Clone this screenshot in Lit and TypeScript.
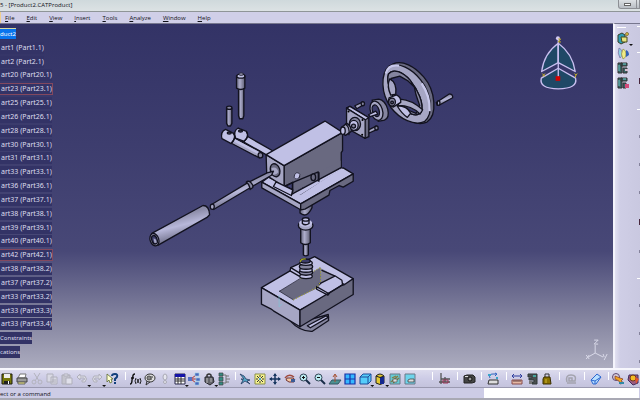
import { LitElement, html, svg, css } from "lit";
import { customElement, property } from "lit/decorators.js";

const icons: Record<string, unknown> = {
  save: svg`<path d="M1 1h10v10H1z" fill="#77780c" stroke="#1d1d10"/><path d="M3 1h6v4H3z" fill="#eee"/><path d="M3 8h6v3H3z" fill="#222"/><path d="M7 8h1v3H7z" fill="#fff"/>`,
  print: svg`<path d="M4 1h6L9 5H2z" fill="#fff" stroke="#777"/><path d="M1 5h10v4H1z" fill="#9b9b9b" stroke="#444"/><path d="M2 9h7v2H2z" fill="#eee87a" stroke="#666"/>`,
  cut: svg`<path d="M3 0l5 8M9 0L4 8" stroke="#b3b3bd" fill="none"/><circle cx="3" cy="9" r="2" fill="none" stroke="#b3b3bd"/><circle cx="9" cy="9" r="2" fill="none" stroke="#b3b3bd"/>`,
  copy: svg`<path d="M1 1h6v8H1zM5 4h6v7H5z" fill="#d9d9e4" stroke="#b0b0bb"/><path d="M6 7h4M6 9h4" stroke="#b0b0bb"/>`,
  paste: svg`<path d="M1 2h8v9H1z" fill="#c4c4cd" stroke="#adadb8"/><path d="M3 1h4v2H3zM5 5h6v6H5z" fill="#e0e0ea" stroke="#b0b0bb"/>`,
  undo: svg`<path d="M1 4l3-3v2h5q3 3 0 6H6V7h2q1-1 0-2H4v2z" fill="#dcdce6" stroke="#b0b0bb"/>`,
  redo: svg`<path d="M11 4L8 1v2H3q-3 3 0 6h3V7H4q-1-1 0-2h4v2z" fill="#dcdce6" stroke="#b0b0bb"/>`,
  help: svg`<path d="M1 1v8l2-2 1 3 2-1-1-3h2z" fill="#ffffd0" stroke="#5b6b30" stroke-width=".8"/><path d="M6 3q0-2 3-2t2 3L9 6v2M9 9v2" stroke="#12407c" stroke-width="2" fill="none"/>`,
  fx: svg`<path d="M1 11q2 0 2-4l1-4q0-2 2-2M2 5h3" stroke="#111" stroke-width="1.4" fill="none"/><path d="M7 5q-2 3 0 6M11 5q2 3 0 6M8 6l2 4M10 6l-2 4" stroke="#111" stroke-width=".9" fill="none"/>`,
  comment: svg`<ellipse cx="6" cy="5" rx="5" ry="4" fill="#ddd" stroke="#333"/><path d="M3 4h6M3 6h5M3 8l-1 4 4-3" stroke="#333" fill="none"/><circle cx="5" cy="5" r="2" fill="none" stroke="#555"/>`,
  bang: svg`<ellipse cx="6" cy="4" rx="2" ry="3" fill="#e6e6ee" stroke="#aaaab5"/><circle cx="6" cy="9" r="1.500" fill="#e6e6ee" stroke="#aaaab5"/>`,
  table: svg`<path d="M1 1h10v10H1z" fill="#fff" stroke="#26264a"/><path d="M1 1h10v3H1z" fill="#1414a8"/><path d="M1 6h10M1 8h10M4 4v7M7 4v7" stroke="#333"/>`,
  graph: svg`<path d="M3 6l5-4M3 6h5M3 6l5 4" stroke="#a33"/><path d="M0 4h4v4H0z" fill="#5673c6"/><path d="M7 0h4v3H7zM8 5h4v3H8zM7 9h4v3H7z" fill="#4a66bd" stroke="#99d4e8" stroke-width=".6"/>`,
  lock: svg`<path d="M4 5V2q2-2 4 0v3" fill="none" stroke="#333" stroke-width="1.5"/><path d="M2 4l8 0 1 5-4 3-5-3z" fill="#65656c" stroke="#26262c"/><path d="M4 5v5M8 5v4" stroke="#bbb"/>`,
  struct: svg`<path d="M1 0h4v3H1zM1 4h4v4H1zM1 9h4v3H1z" fill="#348b82" stroke="#444" stroke-width=".7"/><path d="M5 2h3v8H5M8 6h4M8 3h3M8 9h3" fill="none" stroke="#777"/>`,
  fly: svg`<path d="M1 1l4 2 2 3 4 1-3 1 3 3-5-3-4 3 2-4-2-1h3z" fill="#54a9c9" stroke="#263a60" stroke-width=".8"/>`,
  fit: svg`<path d="M1 1h10v10H1z" fill="#f8f48c" stroke="#8a8f4a"/><path d="M3 3l2 2M9 3L7 5M3 9l2-2M9 9L7 7M6 2v2M6 8v2M2 6h2M8 6h2" stroke="#33333a"/><path d="M5 5h2v2H5z" fill="#4b9ad4"/>`,
  pan: svg`<path d="M6 1v10M1 6h10" stroke="#17365f" stroke-width="1.5"/><path d="M6 0l2 3H4zM6 12l2-3H4zM0 6l3-2v4zM12 6L9 4v4z" fill="#17365f"/>`,
  rotate: svg`<path d="M1 5q4-5 9-1" fill="none" stroke="#a04a3c" stroke-width="1.5"/><path d="M3 5h6q3 1 1 4H5L2 7z" fill="#f3c7a2" stroke="#703534"/><path d="M7 6h4v3H7z" fill="#3b5b95"/>`,
  zin: svg`<circle cx="4.500" cy="4.500" r="3.500" fill="#bcecf2" stroke="#345"/><path d="M7 7l4 4" stroke="#182d48" stroke-width="2"/><path d="M3 4.500h3M4.500 3v3" stroke="#111"/>`,
  zout: svg`<circle cx="4.500" cy="4.500" r="3.500" fill="#bcecf2" stroke="#345"/><path d="M7 7l4 4" stroke="#182d48" stroke-width="2"/><path d="M3 4.500h3" stroke="#111"/>`,
  normal: svg`<path d="M3 7h9l-3 4H0z" fill="#4c9191" stroke="#345764"/><path d="M6 9V2M4 4l2-3 2 3" stroke="#a55030" fill="none"/>`,
  multi: svg`<path d="M1 1h10v10H1z" fill="#35b8ff" stroke="#1732a8" stroke-width="1.2"/><path d="M6 1v10M1 6h10" stroke="#1732a8" stroke-width="1.2"/>`,
  iso: svg`<path d="M1 4l3-3h8v7l-3 3H1z" fill="#55cdfa" stroke="#1e4d9a"/><path d="M1 4h8v7M9 4l3-3" fill="none" stroke="#1e4d9a"/>`,
  shade: svg`<path d="M2 3q4-4 8 0v7q-4 3-8 0z" fill="#e2c832" stroke="#222"/><path d="M6 4h4v7H6z" fill="#14288e"/><path d="M2 3q4 3 8 0" stroke="#222" fill="none"/>`,
  hide: svg`<path d="M1 1h10v10H1z" fill="#65cbd5" stroke="#6b7988"/><path d="M2 9l7-6M4 10l6-5M3 5l4-2" stroke="#8a7a40" stroke-width="1.3"/><path d="M4 6h4v3H4z" fill="#ddd" stroke="#444" stroke-width=".6"/>`,
  swap: svg`<path d="M1 1h10v10H1z" fill="#6dd4eb" stroke="#6b7988"/><path d="M4 7l2-1h4v3H4z" fill="#ddd" stroke="#444" stroke-width=".8"/>`,
  axis: svg`<path d="M3 0v11M1 9h11M7 4v5M3 6h9" stroke="#555" stroke-width="1.3"/><path d="M5 7h5v3H5z" fill="none" stroke="#935"/>`,
  camera: svg`<path d="M1 3l3-1h6l2 2v5l-3 1H1z" fill="#444" stroke="#222"/><circle cx="7" cy="6" r="2" fill="#999" stroke="#111"/><path d="M2 3h3v1H2z" fill="#ddd"/>`,
  material: svg`<path d="M2 7h9v4H1z" fill="#ddd" stroke="#333"/><path d="M3 5q-2-4 3-4h3M8 0l2 1-2 2" fill="none" stroke="#2e62c0"/><path d="M1 1h3v2H1zM9 4h2v2H9z" fill="#39a5c8"/>`,
  measure: svg`<path d="M1 3h10M3 1L1 3l2 2M9 1l2 2-2 2" stroke="#2e3d9c" fill="none"/><path d="M1 7h10v4H1z" fill="#e6b9a5" stroke="#864a4a"/><path d="M3 7v2M5 7v2M7 7v2M9 7v2" stroke="#644"/>`,
  item: svg`<path d="M2 1h9v10H6V9h2V7H3V5h3V4H2z" fill="#4a5050" stroke="#303838"/><path d="M7 2h3v2H7z" fill="#48a59e"/><path d="M3 8h3v3H3z" fill="#777"/>`,
  weight: svg`<path d="M4 4V1h4v3" fill="none" stroke="#333"/><path d="M3 4h6l1 7H2V6z" fill="#8b7200" stroke="#382d00"/><path d="M5 6v4" stroke="#cdb536"/>`,
  gray: svg`<path d="M2 9q-2-7 4-7 6 0 4 6H7V5H4v3h3M2 10h9" fill="none" stroke="#a3a3ad" stroke-width="1.5"/>`,
  erase: svg`<path d="M1 7l6-6 4 3-5 7H3z" fill="#b9dfff" stroke="#2c67cf"/><path d="M1 7l4 1 6-4M5 8v3" stroke="#2c67cf" fill="none"/>`,
  cat1: svg`<circle cx="4" cy="4" r="3.500" fill="#d5cbd9" stroke="#5c4870"/><path d="M3 3l5 2 3 1-2 2 3 2-4 1-1-3-4-2z" fill="#f0a51f" stroke="#84351f" stroke-width=".7"/><path d="M7 9h5v2H7z" fill="#2f8aa7"/>`,
  cat2: svg`<path d="M2 2h9v8l-5 2-5-5z" fill="#9b5d80" stroke="#422c5e"/><circle cx="6" cy="5" r="3" fill="#f0bd25" stroke="#73381c"/><path d="M8 4l4 2-3 5z" fill="#e0552e"/>`,
  cube: svg`<path d="M1 3l4-2 3 2v7l-4 2-3-2z" fill="#2f9cb5" stroke="#373f27"/><path d="M4 5h6v5H5z" fill="#e4e37f" stroke="#494a1f"/><circle cx="10" cy="2" r="1.500" fill="#e3c445" stroke="#675921" stroke-width=".7"/>`,
  blades: svg`<path d="M2 1q3 1 3 5T3 11Q0 6 2 1z" fill="#8ed3e4" stroke="#7c68a0" stroke-width=".7"/><path d="M6 2q3 1 3 5T6 12Q3 7 6 2z" fill="#f1ec86" stroke="#888c4a" stroke-width=".7"/><path d="M9 3q3 1 3 5L9 10z" fill="#3261b3"/>`,
  asm: svg`<path d="M1 1h4v10H1zM4 1h6v3H4zM6 6h4v5H6z" fill="#396465" stroke="#333"/><path d="M6 2h3M2 3v6" stroke="#6ecfd0"/><path d="M8 7h3v2H8z" fill="#d9bfd1"/>`,
  asm2: svg`<path d="M1 1h4v10H1zM4 1h6v3H4zM6 6h3v5H6z" fill="#396465" stroke="#333"/><path d="M6 2h3M2 3v6" stroke="#6ecfd0"/><path d="M8 7h4v4H8z" fill="#d24a79"/>`,
};

@customElement("tool-button")
class ToolButton extends LitElement {
  @property() icon = "";
  @property() label = "";
  @property({ type: Boolean }) menu = false;
  static styles = css`
    :host { display: block; flex: 1; min-width: 0; height: 16px; }
    button { position: relative; display: grid; place-items: center; width: 100%; height: 16px; padding: 0; border: 0; background: none; }
    svg { width: 12px; height: 12px; display: block; overflow: visible; }
    .arrow { position: absolute; right: -2px; bottom: 0; width: 4px; height: 2px; background: #111; clip-path: polygon(0 0, 100% 0, 50% 100%); }
  `;
  render() {
    return html`<button aria-label=${this.label}><svg viewBox="0 0 12 12" aria-hidden="true">${icons[this.icon]}</svg>${this.menu ? html`<span class="arrow"></span>` : ""}</button>`;
  }
}

@customElement("exploded-model")
class ExplodedModel extends LitElement {
  static styles = css`
    :host { display: block; }
    svg { width: 100%; height: 100%; display: block; }
    .o { stroke: #12121f; stroke-width: 4; stroke-linejoin: round; stroke-linecap: round; }
    .n { fill: none; }
    .top { fill: #c0c0e5; }
    .face { fill: #a6a6c4; }
    .side { fill: #696980; }
    .mid { fill: #85859f; }
    .hole { fill: #3c3c69; }
    .thin { stroke-width: 2; }
  `;
  render() {
    return html`<svg viewBox="0 23 613 345" role="img" aria-label="Exploded view of the assembly">
      <defs>
        <linearGradient id="rod" x1=".35" y1=".2" x2=".6" y2=".9"><stop offset=".1" stop-color="#8c8ca8"/><stop offset=".45" stop-color="#b8b8da"/><stop offset=".9" stop-color="#70708a"/></linearGradient>
        <linearGradient id="pin"><stop offset="0" stop-color="#62627a"/><stop offset=".4" stop-color="#adadcb"/><stop offset="1" stop-color="#5f5f75"/></linearGradient>
      </defs>

      <g transform="translate(250 205) scale(.33333)">
        <path class="o mid" d="M118 345L150 352 235 328 236 346 186 379Q150 380 118 345z"/>
        <path class="o top" d="M172 362L228 332 236 336 181 368z"/>
        <path class="o top" d="M34 247L120 197 122 187 194 154 310 220 308 232 150 315z"/>
        <path class="o face" d="M34 247L150 315V365L70 317 62 311 34 297z"/>
        <path class="o side" d="M150 315L276 240 284 238 310 220V268L150 365z"/>
        <path class="side" d="M88 258L152 220 184 203 212 186 214 236 200 250 130 284z"/>
        <path class="mid" d="M214 190L254 211 206 238 212 230z"/>
        <path class="o n" d="M120 197L150 214M122 187L152 205M200 244L236 265 282 236M200 246V252L234 270 240 262M216 195L254 212M208 236L256 212 276 225 278 238"/>
        <path class="o n thin" d="M88 258L150 220M88 258L130 284"/>
        <path d="M130 284L200 247M152 220L212 186V230L200 247" fill="none" stroke="#a5a52c" stroke-width="3" stroke-dasharray="4 5"/>
        <path d="M87 270V305L96 296" stroke="#7fc3d4" stroke-width="2" fill="none"/>
        <ellipse class="o top" cx="168" cy="213" rx="19" ry="7"/>
        <ellipse class="o mid" cx="168" cy="202" rx="20" ry="8"/>
        <ellipse class="o top" cx="168" cy="194" rx="19" ry="7"/>
        <ellipse class="o mid" cx="168" cy="184" rx="20" ry="8"/>
        <ellipse class="o top" cx="168" cy="173" rx="19" ry="7"/>
        <ellipse class="o hole" cx="166" cy="167" rx="15" ry="6"/>
        <path d="M151 170Q151 160 167 161" fill="none" stroke="#a0a51f" stroke-width="4"/>
        <path class="o" fill="url(#pin)" d="M160 110H175V149Q167 154 160 149z"/>
        <path class="o" fill="url(#pin)" d="M152 62H181V112Q167 123 152 112z"/>
        <ellipse class="o face" cx="167" cy="60" rx="22" ry="14"/>
        <ellipse class="top" cx="167" cy="53" rx="20" ry="11"/>
        <path class="o top" d="M157 43V54Q166 62 177 54V43"/>
        <ellipse class="o top" cx="167" cy="42" rx="10" ry="5"/>
      </g>

      <g transform="translate(210 60) scale(.33333)">
        <path class="o" fill="url(#pin)" d="M270 445V458Q290 475 306 442V430z"/>
        <path class="o" fill="url(#pin)" d="M85 80H101V165L98 174H88L85 165z"/>
        <path class="o" fill="url(#pin)" d="M79 45H104V82Q92 90 79 82z"/>
        <ellipse class="o top" cx="92" cy="46" rx="12" ry="6"/>
        <ellipse class="o mid thin" cx="93" cy="40" rx="7" ry="4"/>
        <path class="o" fill="url(#pin)" d="M49 142H65V188L61 196H53L49 188z"/>
        <ellipse class="o mid" cx="57" cy="141" rx="8" ry="5"/>
        <path class="o top" d="M110 226L190 272 178 288 97 242z"/>
        <path class="o top" d="M84 202L109 212Q119 225 102 242L76 232Q68 211 84 202z"/>
        <path d="M109 214Q118 227 102 242" class="o n" stroke-width="6"/>
        <ellipse class="o side" cx="91" cy="211" rx="6" ry="3"/>
        <path class="o face" d="M69 230L152 274Q158 283 148 292L62 247z"/>
        <path class="top" d="M74 235L145 273 143 280 72 243z"/>
        <ellipse class="o mid" cx="151" cy="284" rx="7" ry="8"/>
        <path class="o top" d="M46 206L70 218Q80 228 63 249L35 234Q30 213 46 206z"/>
        <path d="M70 218Q79 232 63 248" class="o n"/>
        <ellipse class="o side" cx="57" cy="217" rx="6" ry="3"/>

        <path class="o top" d="M155 365L175 350 272 400 388 325 400 322 430 340 272 430z"/>
        <path class="o face" d="M155 365L272 430V448L155 382z"/>
        <path class="o side" d="M272 430L430 340V362L400 380 388 375 360 390 357 404 285 446 272 448z"/>
        <path class="o side" d="M222 315L398 215V270L394 276V322L290 385 247 366 222 378z"/>
        <path class="top" d="M249 397L392 324 398 324 272 402z"/>
        <path class="side" d="M249 368L325 336 392 300V321L249 396z"/>
        <path class="o face" d="M168 282L222 315V378L170 345z"/>
        <path class="o top" d="M168 282L345 181 398 215 222 315z"/>
        <path class="o n" d="M222 378L247 366 325 334V361M247 366V400L392 322"/>
        <path class="o top" d="M198 364L248 388 244 405 190 378z"/>
        <path class="o n" d="M248 366V400"/>
        <ellipse class="o side" cx="195" cy="329" rx="14" ry="20" transform="rotate(-18 195 329)"/>
        <path class="face" d="M184 322Q202 317 205 335 199 344 188 342z"/>
        <ellipse class="o top thin" cx="261" cy="346" rx="8" ry="10" transform="rotate(25 261 346)"/>
        <ellipse class="o side" cx="310" cy="350" rx="7" ry="10"/>
        <path class="o n" d="M321 336H327V362"/>

        <path class="o" fill="url(#rod)" d="M4 432L112 367 171 337 190 332 184 344 121 381 10 447z"/>
        <ellipse class="o face" cx="6" cy="439" rx="6" ry="8"/>
        <path class="o mid" d="M108 365Q117 356 128 374V381L120 387Q117 370 108 365z"/>
      </g>

      <g transform="translate(140 165) scale(.33333)">
        <path class="o" fill="url(#rod)" d="M34 204L188 120Q207 120 208 148L200 156 52 240Q28 240 34 204z"/>
        <ellipse class="o face" cx="42" cy="223" rx="13" ry="19" transform="rotate(-18 42 223)"/>
        <ellipse class="o hole" cx="42" cy="223" rx="8" ry="13" transform="rotate(-18 42 223)"/>
        <path class="face" d="M39 219Q48 219 49 232L42 233z"/>
      </g>

      <g transform="translate(330 50) scale(.33333)">
        <path class="o" fill="url(#rod)" d="M320 155L360 129Q371 131 369 141L331 162 323 164z"/>
        <ellipse class="o face" cx="327" cy="157" rx="4" ry="7"/>
        <path class="o side" fill-rule="evenodd" d="M190 39C218 27 254 46 282 78C318 119 324 193 292 214C263 227 219 208 190 172C157 134 151 66 190 39zM184 68C171 91 187 136 213 165C238 194 269 207 281 188C293 161 275 114 250 83C226 56 197 49 184 68z"/>
        <path class="o face" fill-rule="evenodd" d="M179 45C207 33 246 53 273 87C306 129 313 190 284 213C254 226 211 206 184 171C153 129 151 69 179 45zM176 70C169 91 183 135 208 162C234 190 262 202 275 183C283 158 265 118 241 88C219 63 190 51 176 70z"/>
        <path d="M168 68Q175 39 208 44M276 98Q302 135 300 181" fill="none" stroke="#c8c8eb" stroke-width="7"/>
        <path class="o mid" fill-rule="evenodd" d="M176 70C190 51 219 63 241 88C265 118 283 158 275 183C262 202 234 190 208 162C183 135 169 91 176 70zM184 83L210 76 236 91 254 109 259 132 270 164 259 188 240 180 206 152 186 118z"/>
        <path class="o face" d="M180 84Q202 95 198 130L183 133Q170 106 180 84zM211 145Q246 147 279 177L271 190Q246 164 205 164z"/>
        <path class="o top" d="M202 165Q231 164 243 187L233 200Q217 190 202 165z"/>
        <path class="o top" d="M178 141L200 132Q215 139 213 155L190 169Q171 162 178 141z"/>
        <ellipse class="o mid" cx="187" cy="154" rx="10" ry="12"/>
        <circle class="o side" cx="187" cy="155" r="4"/>
        <path class="o mid" d="M127 148L147 145Q166 148 174 176 180 202 164 208L145 212z"/>
        <ellipse class="o face" cx="140" cy="180" rx="18" ry="30" transform="rotate(-18 140 180)"/>
        <ellipse class="o hole" cx="138" cy="180" rx="10" ry="18" transform="rotate(-18 138 180)"/>
        <path class="o top" d="M116 192L138 181 144 190 121 198z"/>
        <path class="o face" d="M75 165L98 154 103 161 81 174zM112 240L139 226 144 235 118 247z"/>
        <ellipse class="o mid" cx="99" cy="159" rx="5" ry="6"/><ellipse class="o mid" cx="140" cy="232" rx="5" ry="6"/>
        <path class="o side" d="M50 172L60 167 117 201V258L105 263z"/>
        <path class="o top" d="M50 172L60 167 117 201 106 207z"/>
        <path class="o face" d="M50 172L106 207V263L50 232z"/>
        <ellipse class="o mid" cx="75" cy="220" rx="17" ry="20"/>
        <ellipse class="o top" cx="72" cy="224" rx="13" ry="15"/>
        <circle class="o mid" cx="71" cy="226" r="6"/>
        <circle cx="56" cy="182" r="3"/><circle cx="98" cy="208" r="3"/><circle cx="97" cy="252" r="3"/>
        <path class="o face" d="M36 229L51 218Q64 226 64 242L47 254 36 248z"/>
        <path class="o n" d="M47 220Q61 232 57 252"/>
        <ellipse class="o top" cx="39" cy="240" rx="7" ry="11"/>
      </g>

      <g transform="translate(500 0) scale(.33333)">
        <g fill="#1f4866" stroke="#c9bff0" stroke-width="4" stroke-linejoin="round">
          <path d="M177 127Q134 158 127 212L177 185z"/><path d="M177 127Q220 158 228 212L177 185z"/>
          <path d="M177 202L126 232Q118 263 177 264 237 263 229 232z"/><path d="M177 114V228"/>
        </g>
        <circle cx="176" cy="112" r="6" fill="#d4cbf2"/><path d="M169 226h14v14h-14z" fill="#d40000"/>
        <path d="M177 114h7l-7 9h8M129 218l8 9M137 218l-8 9M226 218l4 5 4-5M230 223l-2 7" stroke="#c8b428" stroke-width="3" fill="none"/>
      </g>
      <path d="M596 345V353L589 357M596 353L604 357M595 340h4l-4 4h4M587 355l3 4M590 355l-3 4M604 354l1 3M608 354l-3 6" fill="none" stroke="#d9d9e8"/>
    </svg>`;
  }
}

const nodes = ["duct2", ..."1.1 2.1 20.1 23.1 25.1 26.1 28.1 30.1 31.1 33.1 36.1 37.1 38.1 39.1 40.1 42.1 38.2 37.2 33.2 33.3 33.4".split(" ").map(n => `art${n.split(".")[0]} (Part${n})`), "Constraints", "cations"];
const flagged = new Set([4, 16]);
const menus = ["File", "Edit", "View", "Insert", "Tools", "Analyze", "Window", "Help"];

type Tool = [string, string, boolean?];
const groups: Tool[][] = [
  [["save", "Save"], ["print", "Print"], ["cut", "Cut"], ["copy", "Copy"], ["paste", "Paste"], ["undo", "Undo", true], ["redo", "Redo", true], ["help", "What's This?"]],
  [["fx", "Formula"], ["comment", "Comment"], ["bang", "Check"], ["table", "Design Table", true], ["graph", "Relations"], ["lock", "Lock", true], ["struct", "Structure"]],
  [["fly", "Fly Mode"], ["fit", "Fit All In"], ["pan", "Pan"], ["rotate", "Rotate"], ["zin", "Zoom In"], ["zout", "Zoom Out"], ["normal", "Normal View"], ["multi", "Multi View"], ["iso", "Isometric View", true], ["shade", "Shading", true], ["hide", "Hide/Show"], ["swap", "Swap Visible Space"]],
  [["axis", "Axis System"]],
  [["camera", "Capture"]],
  [["material", "Apply Material"]],
  [["measure", "Measure Between"], ["item", "Measure Item"], ["weight", "Measure Inertia"]],
  [["gray", "Update"]],
  [["erase", "Annotation"]],
  [["cat1", "Catalog"], ["cat2", "Library"]],
];

@customElement("app-root")
class AppRoot extends LitElement {
  static styles = css`
    :host { display: flex; flex-direction: column; height: 100vh; overflow: hidden; background: #cfcee6; font: 6px/10px "Open Sans", sans-serif; color: #101018; }
    * { box-sizing: border-box; }
    .title { display: flex; justify-content: space-between; height: 12px; background: linear-gradient(#cfd9dc, #dce2e4); border-bottom: 1px solid #8f9598; }
    h1 { margin: 0; font: 6px/11px "Open Sans", sans-serif; white-space: pre; }
    .window { display: flex; }
    .window button { width: 19px; height: 9px; margin-right: -1px; padding: 0; border: 1px solid #8c8f94; border-top: 0; border-radius: 0 0 0 3px; background: linear-gradient(#dde1e4, #b9bec4); display: grid; place-items: center; }
    .window button:last-child { width: 4px; margin: 0; border-radius: 0; }
    .bar { width: 7px; height: 3px; background: #fff; border: 1px solid #666; }
    nav { display: flex; gap: 12px; height: 11px; padding-left: 4px; background: #d0cfe8; border-left: 1px solid #f0d090; }
    nav button { padding: 0; border: 0; background: none; color: inherit; font: 6px/10px "Open Sans", sans-serif; }
    nav u { text-underline-offset: 1px; }
    main { flex: 1; min-height: 0; display: flex; }
    .view { position: relative; flex: 1; min-width: 0; overflow: hidden; border-top: 1px solid #77778e; background: linear-gradient(#333366, #3d3d6e 35%, #484877 66%, #8585a0 86%, #acacbf); }
    .view exploded-model { position: absolute; inset: 0; }
    ul { position: relative; display: grid; grid-auto-rows: 1fr; align-items: center; justify-items: start; height: 100%; margin: 0; padding: 3px 0 9px; list-style: none; color: #dedeed; font: 7px/10px "Noto Sans", sans-serif; }
    li { height: 12px; padding-left: 1px; border: 1px solid transparent; border-left: 0; border-right-width: 0; background: #333366; white-space: nowrap; }
    .active { height: 11px; background: #0874ee; color: #fff; border-color: #d8d8a0 transparent transparent; }
    .flag { border-color: #83485f; border-right-width: 1px; }
    .cut { padding-left: 0; font-size: 6px; }
    aside { display: flex; flex: none; width: 27px; border-left: 2px solid #f4f4fc; border-top: 1px solid #77778e; background: linear-gradient(90deg, #e2e1f1, #cfcee6 5px, #c9c8e0); }
    .strip { width: 21px; padding-top: 3px; display: flex; flex-direction: column; }
    .strip::before { content: ""; width: 9px; height: 1px; margin: 0 0 2px 2px; background: #fff; }
    .strip tool-button { flex: none; width: 16px; height: 15px; }
    .edge { flex: 1; display: flex; flex-direction: column; justify-content: space-between; align-items: end; padding: 2px 0 5px; }
    .edge i { width: 1px; height: 3px; background: #85839c; }
    .edge .rule { width: 3px; height: 1px; background: #fff; }
    .edge .dark { height: 6px; background: #48263c; }
    .tools { display: grid; grid-template-columns: 125fr 110fr 197fr 25fr 24fr 25fr 53fr 25fr 24fr 32fr; height: 20px; border-top: 2px solid #f7f7fd; border-bottom: 1px solid #9a99b0; background: linear-gradient(#dcdbed, #cdcce6 50%, #c4c3dc); }
    .group { display: flex; padding: 1px 4px 0 3px; min-width: 0; background: linear-gradient(#fff, #fff) 0 2px / 1px 8px no-repeat; }
    .group.first { padding: 1px 6px 0 0; background: none; }
    .group.wide { padding-right: 15px; }
    .group.last { padding-right: 0; }
    footer { display: flex; height: 12px; background: #cdcce6; border-bottom: 2px solid #a9a9b4; }
    footer label { flex: 484; line-height: 12px; }
    footer input { flex: 155; min-width: 0; padding: 0; margin-right: 1px; border: 0; background: #fff; font: inherit; }
  `;
  render() {
    return html`
      <div class="title"><h1>5 - [Product2.CATProduct]</h1><div class="window"><button aria-label="Minimize"><span class="bar"></span></button><button aria-label="Restore"></button></div></div>
      <nav>${menus.map(m => html`<button><u>${m[0]}</u>${m.slice(1)}</button>`)}</nav>
      <main>
        <section class="view">
          <exploded-model></exploded-model>
          <ul>${nodes.map((n, i) => html`<li class=${i === 0 ? "active cut" : flagged.has(i) ? "flag" : i > 21 ? "cut" : ""}>${n}</li>`)}</ul>
        </section>
        <aside>
          <div class="strip">
            <tool-button icon="cube" label="Insert Component" menu></tool-button>
            <tool-button icon="blades" label="Section"></tool-button>
            <tool-button icon="asm" label="Part Clash"></tool-button>
            <tool-button icon="asm2" label="Clash"></tool-button>
          </div>
          <div class="edge"><i class="rule"></i><i class="rule"></i><i class="dark"></i><i class="rule"></i><i></i><i></i><i></i><i class="dark"></i><i></i><i class="rule"></i><i></i><i></i><i></i></div>
        </aside>
      </main>
      <div class="tools">${groups.map((g, i) => html`<div class="group ${i === 0 ? "first" : i === 2 ? "wide" : i === 9 ? "last" : ""}">${g.map(([k, l, m]) => html`<tool-button icon=${k} label=${l} ?menu=${!!m}></tool-button>`)}</div>`)}</div>
      <footer><label for="command">ect or a command</label><input id="command"></footer>
    `;
  }
}
